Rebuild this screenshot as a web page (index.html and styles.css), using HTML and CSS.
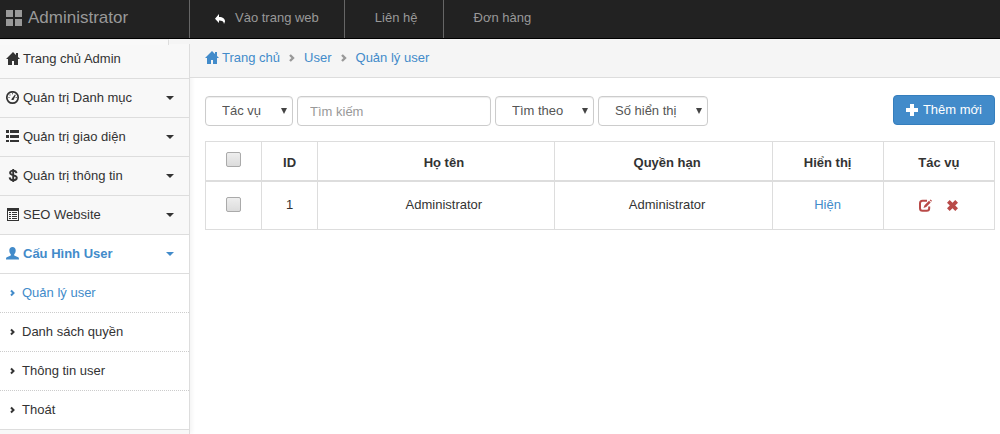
FILE: index.html
```html
<!DOCTYPE html>
<html lang="vi">
<head>
<meta charset="utf-8">
<title>Administrator</title>
<link rel="stylesheet" href="styles.css">
</head>
<body>
<svg class="defs" aria-hidden="true">
  <symbol id="home" viewBox="0 0 14 14"><path d="M7 0 0 7h2v6h4V9h2v4h4V7h2l-2-2V1h-2v2z"/></symbol>
  <symbol id="chev" viewBox="0 0 6 8"><path d="M1 1.500 3.500 4 1 6.500" fill="none" stroke="currentColor" stroke-width="2"/></symbol>
</svg>
<header class="topbar">
  <a class="brand" href="#">
    <svg class="brand-icon" viewBox="0 0 16 16"><path d="M0 0h7v7H0zM9 0h7v7H9zM0 9h7v7H0zM9 9h7v7H9z"/></svg>
    Administrator
  </a>
  <nav class="topnav">
    <a href="#"><svg class="reply" viewBox="0 0 10 10"><path d="M4 0v3c4 0 6 2 6 4.500L9 10C9 7.500 7 6.500 4 6.500V9L0 4.700z"/></svg>Vào trang web</a>
    <a href="#">Liên hệ</a>
    <a href="#">Đơn hàng</a>
  </nav>
</header>
<div class="layout">
  <aside class="sidebar">
    <div class="tab"></div>
    <nav class="menu">
      <a class="item first" href="#"><svg class="icon"><use href="#home"/></svg>Trang chủ Admin</a>
      <a class="item" href="#"><svg class="icon" viewBox="0 0 14 14"><circle cx="6.500" cy="6.500" r="5.700" fill="none" stroke="currentColor" stroke-width="1.700"/><path d="M5.500 8 9 3.500l.8.600L7.500 9H5.500zM2.500 6h1v1h-1zM3.500 3.500h1v1h-1zM6 2.300h1v1H6zM9.700 6h1v1h-1z"/></svg>Quản trị Danh mục<span class="caret"></span></a>
      <a class="item" href="#"><svg class="icon" viewBox="0 0 14 14"><path d="M0 0h3v3H0zM4 0h9v3H4zM0 5h3v3H0zM4 5h9v3H4zM0 10h3v2H0zM4 10h9v2H4z"/></svg>Quản trị giao diện<span class="caret"></span></a>
      <a class="item" href="#"><svg class="icon" viewBox="0 0 14 14"><path d="M10.500 4.200C10.300 2.500 9 1.600 7.200 1.600 5.300 1.600 4.100 2.500 4.100 3.800c0 3.400 6.700 1.700 6.700 5 0 1.500-1.400 2.400-3.500 2.400-2.200 0-3.500-1-3.700-2.800M7.200 0v13" fill="none" stroke="currentColor" stroke-width="1.900"/></svg>Quản trị thông tin<span class="caret"></span></a>
      <a class="item" href="#"><svg class="icon" viewBox="0 0 14 14"><path fill-rule="evenodd" d="M1 0h12v13H1zM2 3v9h10V3zM3 4h2v1H3zM6 4h5v1H6zM3 6h2v1H3zM6 6h5v1H6zM3 8h2v1H3zM6 8h5v1H6zM3 10h2v1H3zM6 10h5v1H6z"/></svg>SEO Website<span class="caret"></span></a>
      <a class="item active" href="#"><svg class="icon" viewBox="0 0 14 14"><path d="M6.500 0c2 0 3.200 1.300 3.200 3.200 0 1.800-.6 3.200-1.500 4.100v1.200l4 1.800c.6.400.8 1 .8 2.200H0c0-1.200.2-1.800.8-2.200l4-1.800V7.300C3.900 6.400 3.300 5 3.300 3.200 3.300 1.300 4.500 0 6.500 0z"/></svg>Cấu Hình User<span class="caret"></span></a>
    </nav>
    <nav class="submenu">
      <a class="current" href="#"><svg class="chev"><use href="#chev"/></svg>Quản lý user</a>
      <a href="#"><svg class="chev"><use href="#chev"/></svg>Danh sách quyền</a>
      <a href="#"><svg class="chev"><use href="#chev"/></svg>Thông tin user</a>
      <a href="#"><svg class="chev"><use href="#chev"/></svg>Thoát</a>
    </nav>
  </aside>
  <main class="main">
    <nav class="crumbs">
      <a href="#"><svg class="icon"><use href="#home"/></svg>Trang chủ</a>
      <svg class="chev sep" viewBox="0 0 6 8"><path d="M1 1 4 4 1 7" fill="none" stroke="currentColor" stroke-width="2.400"/></svg>
      <a href="#">User</a>
      <svg class="chev sep" viewBox="0 0 6 8"><path d="M1 1 4 4 1 7" fill="none" stroke="currentColor" stroke-width="2.400"/></svg>
      <a href="#">Quản lý user</a>
    </nav>
    <div class="content">
      <form class="tools">
        <span class="pick action"><select aria-label="Tác vụ"><option>Tác vụ</option></select></span>
        <input class="search" type="text" placeholder="Tìm kiếm" aria-label="Tìm kiếm">
        <span class="pick by"><select aria-label="Tìm theo"><option>Tìm theo</option></select></span>
        <span class="pick count"><select aria-label="Số hiển thị"><option>Số hiển thị</option></select></span>
        <button class="add" type="button"><svg viewBox="0 0 12 12"><path d="M4 0h4v4h4v4H8v4H4V8H0V4h4z"/></svg>Thêm mới</button>
      </form>
      <table class="grid">
        <colgroup><col class="c-check"><col class="c-id"><col class="c-name"><col class="c-role"><col class="c-show"><col class="c-act"></colgroup>
        <thead>
          <tr><th><input type="checkbox" aria-label="Chọn tất cả"></th><th>ID</th><th class="name">Họ tên</th><th class="role">Quyền hạn</th><th>Hiển thị</th><th>Tác vụ</th></tr>
        </thead>
        <tbody>
          <tr><td><input type="checkbox" aria-label="Chọn user 1"></td><td>1</td><td class="name">Administrator</td><td class="role">Administrator</td><td><a href="#">Hiện</a></td>
          <td><span class="acts">
            <a href="#" aria-label="Sửa"><svg viewBox="0 0 13 13"><path d="M8 1.800H3.500Q1 1.800 1 4.300v5Q1 11.800 3.500 11.800h4.200q2.500 0 2.500-2.500V7.500" fill="none" stroke="currentColor" stroke-width="2"/><path d="M4.500 9 5.500 6.300 10 1.800l1.700 1.700L7.200 8zM10.700 1.200l.8-.8 1.500 1.400-.8.900z"/></svg></a>
            <a href="#" aria-label="Xóa"><svg viewBox="0 0 13 13"><path d="M3.700 1 6.500 3.800 9.300 1 12 3.700 9.200 6.500 12 9.300 9.300 12 6.500 9.200 3.700 12 1 9.300 3.800 6.500 1 3.700z"/></svg></a>
          </span></td></tr>
        </tbody>
      </table>
    </div>
  </main>
</div>
</body>
</html>
```
FILE: styles.css
```css
* { box-sizing: border-box; }
body {
  margin: 0;
  min-height: 100vh;
  display: flex;
  flex-direction: column;
  background: #fff;
  color: #333;
  font: 13px/20px "Liberation Sans", Arial, sans-serif;
}
a { color: #428bca; text-decoration: none; }
svg { fill: currentColor; flex: none; }
.defs { position: absolute; width: 0; height: 0; }

.topbar { display: flex; height: 39px; background: #222; border-bottom: 1px solid #000; }
.brand {
  display: flex; align-items: center; gap: 6px;
  width: 189px; padding: 0 6px 3px;
  color: #999; font-size: 17px;
}
.brand-icon { width: 16px; height: 16px; }
.topnav { display: flex; }
.topnav a {
  display: flex; align-items: center;
  padding: 0 25px 3px 30px;
  color: #999;
  border-left: 1px solid #666;
}
.topnav a:first-child { padding-left: 25px; }
.topnav a:last-child { border-right: 0; }
.reply { width: 10px; height: 10px; margin: 3px 10px 0 0; color: #fff; }

.layout { display: flex; flex: 1; }
.sidebar {
  display: flex; flex-direction: column;
  width: 190px; flex: none;
  background: #f8f8f8;
  border-right: 1px solid #ddd;
  box-shadow: 2px 0 4px rgba(0,0,0,.05);
}
.tab {
  height: 5px; margin-right: -1px; padding-right: 21px;
  background: #f5f5f5;
}
.tab::before {
  content: ""; display: block; height: 100%;
  background: #f9f9f9;
  border-top: 1px solid #eee;
  border-right: 1px solid #ddd;
}
.item {
  display: flex; align-items: center; gap: 3px;
  height: 39px; padding: 0 15px 0 6px;
  color: #333;
  border-bottom: 1px solid #ddd;
}
.item.first { height: 35px; padding-bottom: 5px; }
.icon { width: 14px; height: 14px; }
.item.active { color: #428bca; background: #fff; font-weight: bold; }
.caret {
  margin-left: auto;
  border: 4px solid transparent;
  border-top-color: currentColor;
  border-bottom: 0;
}
.submenu { background: #fff; border-bottom: 1px solid #ddd; }
.submenu a {
  display: flex; align-items: center; gap: 6px;
  height: 39px; padding: 0 10px;
  color: #333;
  border-bottom: 1px dotted #ccc;
}
.submenu a:last-child { height: 38px; border-bottom: 0; }
.submenu .current { color: #428bca; }
.chev { width: 6px; height: 8px; }

.main { flex: 1; min-width: 0; }
.crumbs {
  display: flex; align-items: center; gap: 9px;
  height: 39px; padding: 0 15px;
  background: #f5f5f5;
  border-bottom: 1px solid #ddd;
}
.crumbs a { display: flex; align-items: center; gap: 3px; }
.sep { color: #999; }
.content { padding: 17px 5px 0 15px; }

.tools { display: flex; align-items: flex-end; gap: 4px; height: 31px; margin-bottom: 15px; }
.pick { position: relative; }
.pick::after {
  content: ""; position: absolute; right: 6px; top: 12px;
  border: 3px solid transparent;
  border-top: 6px solid #444;
  border-bottom: 0;
  pointer-events: none;
}
.pick select, .search {
  appearance: none;
  display: block; width: 100%; height: 30px;
  padding: 0 12px;
  font: inherit; color: #555;
  background: #fff;
  border: 1px solid #ccc;
  border-radius: 4px;
  box-shadow: inset 0 1px 1px rgba(0,0,0,.075);
}
.pick select { padding-left: 16px; }
.action { width: 88px; }
.tools .search { width: 194px; }
.search::placeholder { color: #999; opacity: 1; }
.by { width: 99px; }
.count { width: 110px; }
.add {
  display: flex; align-items: center; align-self: flex-start; gap: 5px;
  height: 30px; margin-left: auto; padding: 0 12px;
  color: #fff; font: inherit;
  background: #428bca;
  border: 1px solid #357ebd;
  border-radius: 4px;
}
.add svg { width: 12px; height: 12px; }

.grid { width: 100%; table-layout: fixed; border-collapse: collapse; text-align: center; }
.c-check, .c-id { width: 7.1%; }
.c-name { width: 30%; }
.c-role { width: 27.6%; }
.c-show, .c-act { width: 14.1%; }
.grid th, .grid td { padding: 0; border: 1px solid #ddd; vertical-align: middle; }
.grid th { height: 39px; padding-top: 5px; border-bottom-width: 2px; }
.grid td { height: 49px; }
.grid .name { padding-left: 16px; }
.grid .role { padding-left: 8px; }
.grid input {
  appearance: none;
  display: block; width: 15px; height: 15px; margin: 0 auto;
  border: 1px solid #aaa; border-radius: 2px;
  background: linear-gradient(#eee, #dcdcdc);
}
.grid th input { margin-bottom: 7px; }
.grid td input { margin-bottom: 2px; }
.acts { display: flex; justify-content: center; gap: 14px; }
.acts a { display: flex; color: #b94a48; }
.acts svg { width: 13px; height: 13px; }
```
